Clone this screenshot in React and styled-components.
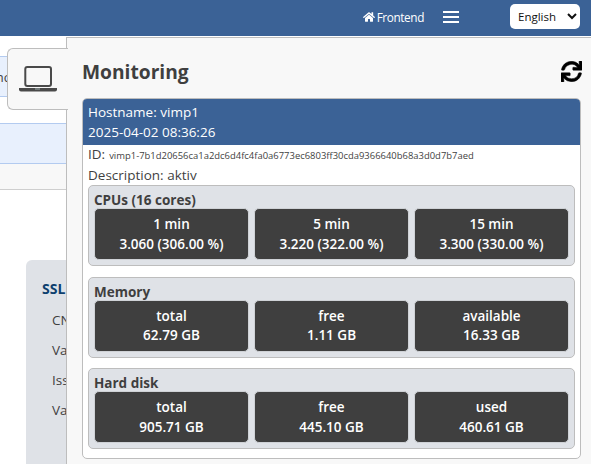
import React from "react";
import styled, { createGlobalStyle } from "styled-components";
import { FaHome, FaSync } from "react-icons/fa";

const Global = createGlobalStyle`
  html, body { margin: 0; height: 100%; overflow: hidden; background: #fff; }
  body { font-family: "Open Sans", "Noto Sans", sans-serif; font-size: 13.5px; color: #3f3f3f; }
  #root { height: 100%; }
  * { box-sizing: border-box; }
`;

const Page = styled.div`
  position: relative;
  width: 591px;
  height: 464px;
  overflow: hidden;
`;
const TopBar = styled.header`
  height: 36px;
  background: #3b6296;
  display: flex;
  align-items: center;
  justify-content: flex-end;
  padding: 0 11px 3px 0;
  color: #fff;
`;
const FrontLink = styled.a`
  display: flex;
  align-items: center;
  gap: 2px;
  font-size: 11.8px;
  font-weight: 500;
  color: #fff;
  margin-right: 19px;
  letter-spacing: -0.4px;
`;
const Burger = styled.div`
  width: 16px;
  height: 12px;
  margin-right: 51px;
  border-top: 2px solid #fff;
  border-bottom: 2px solid #fff;
  position: relative;
  &::after {
    content: "";
    position: absolute;
    left: 0;
    right: 0;
    top: 3px;
    height: 2px;
    background: #fff;
  }
`;
const LangWrap = styled.div`
  position: relative;
  width: 70px;
  height: 25px;
`;
const Lang = styled.select`
  appearance: none;
  width: 100%;
  height: 100%;
  border: 0;
  border-radius: 5px;
  background: #fff;
  color: #111;
  font: 11.5px "Open Sans", sans-serif;
  padding: 0 0 0 8px;
`;
const Chevron = styled.svg`
  position: absolute;
  right: 3px;
  top: 9px;
  width: 10px;
  height: 7px;
  pointer-events: none;
`;

const Backdrop = styled.div`
  display: flex;
  flex-direction: column;
`;
const Row = styled.div`
  height: ${(p) => p.$h}px;
  margin-top: ${(p) => p.$mt}px;
  background: ${(p) => p.$bg};
  border-style: solid;
  border-color: ${(p) => p.$line};
  border-width: ${(p) => p.$lineWidth};
  display: flex;
  align-items: center;
`;
const ClippedLabel = styled.div`
  width: 7px;
  overflow: hidden;
  display: flex;
  justify-content: flex-end;
  flex-shrink: 0;
  font-size: 13px;
  span { flex-shrink: 0; margin-right: -3px; }
`;
const SslCard = styled.section`
  margin: 70px 0 0 26px;
  height: 220px;
  background: #dfe2e7;
  border-radius: 6px 0 0 0;
  padding: 19px 0 0 16px;
`;
const SslTitle = styled.div`
  font-size: 14px;
  font-weight: 700;
  color: #0d3f6e;
  line-height: 20px;
  margin-bottom: 11px;
`;
const SslLine = styled.div`
  font-size: 13.5px;
  line-height: 20px;
  margin: 0 0 10px 10px;
  white-space: nowrap;
`;

const Panel = styled.aside`
  position: absolute;
  top: 37px;
  left: 66px;
  right: 0;
  bottom: 0;
  background: #f8f8f8;
  border-left: 1px solid #bdbdbd;
  border-top: 1px solid #bdbdbd;
  padding: 0 10px 0 15px;
`;
const Tab = styled.div`
  position: absolute;
  top: 10px;
  left: -60px;
  width: 61px;
  height: 62px;
  background: #f8f8f8;
  border: 1px solid #bdbdbd;
  border-right: 0;
  border-radius: 6px 0 0 6px;
  display: flex;
  align-items: center;
  justify-content: center;
`;
const PanelHead = styled.div`
  height: 60px;
  display: flex;
  align-items: center;
  justify-content: space-between;
  padding-top: 6px;
`;
const Title = styled.h2`
  margin: 0;
  font-size: 19.2px;
  font-weight: 700;
  color: #3f3f3f;
`;
const Refresh = styled(FaSync)`
  width: 21px;
  height: 21px;
  color: #000;
  margin-right: -1px;
  stroke: #000;
  stroke-width: 12px;
`;
const HostCard = styled.div`
  background: #fff;
  border: 1px solid #bdbdbd;
  border-radius: 5px;
  height: 361px;
  overflow: hidden;
`;
const HostHead = styled.div`
  height: 46px;
  background: #3b6296;
  color: #fff;
  padding: 4px 5px 0;
  line-height: 19.5px;
`;
const HostBody = styled.div`
  padding: 0 5px;
`;
const InfoLine = styled.div`
  line-height: 19.5px;
  white-space: nowrap;
`;
const HostId = styled.span`
  font-size: 9.45px;
  margin-left: 4px;
`;
const Group = styled.section`
  background: #dfe2e7;
  border: 1px solid #bdbdbd;
  border-radius: 5px;
  height: 81px;
  padding: 6px 5px 0;
  margin-bottom: 10.6px;
`;
const GroupTitle = styled.div`
  font-weight: 700;
  font-size: 13.5px;
  line-height: 16px;
  white-space: nowrap;
`;
const Cells = styled.div`
  display: grid;
  grid-template-columns: repeat(3, 1fr);
  gap: 5px;
`;
const Cell = styled.div`
  height: 52px;
  background: #3f3f3f;
  border: 1px solid #cfd2d6;
  border-radius: 5px;
  color: #fff;
  font-weight: 600;
  text-align: center;
  line-height: 19.5px;
  padding-top: 6px;
`;

const groups = [
  { title: "CPUs (16 cores)", cells: [["1 min", "3.060 (306.00 %)"], ["5 min", "3.220 (322.00 %)"], ["15 min", "3.300 (330.00 %)"]] },
  { title: "Memory", cells: [["total", "62.79 GB"], ["free", "1.11 GB"], ["available", "16.33 GB"]] },
  { title: "Hard disk", cells: [["total", "905.71 GB"], ["free", "445.10 GB"], ["used", "460.61 GB"]] },
];

export default function App() {
  return (
    <Page>
      <Global />
      <TopBar>
        <FrontLink><FaHome size={12} />Frontend</FrontLink>
        <Burger />
        <LangWrap>
          <Lang defaultValue="en"><option value="en">English</option></Lang>
          <Chevron viewBox="0 0 10 7"><path d="M1 1l4 4 4-4" fill="none" stroke="#111" strokeWidth="2" /></Chevron>
        </LangWrap>
      </TopBar>
      <Backdrop>
        <Row $mt={20} $h={41} $bg="#e8f0fd" $line="#b3cbf0" $lineWidth="1px 0"><ClippedLabel><span>Sync</span></ClippedLabel></Row>
        <Row $mt={26} $h={41} $bg="#e8f0fd" $line="#b3cbf0" $lineWidth="1px 0" />
        <Row $mt={0} $h={26} $bg="#f8f8f8" $line="#cfcfcf" $lineWidth="0 0 1px" />
        <SslCard>
          <SslTitle>SSL Certificate</SslTitle>
          <SslLine>CN: vimp1</SslLine>
          <SslLine>Valid from</SslLine>
          <SslLine>Issuer</SslLine>
          <SslLine>Valid to</SslLine>
        </SslCard>
      </Backdrop>
      <Panel>
        <Tab>
          <svg width="38" height="26" viewBox="0 0 38 26">
            <rect x="6.3" y="1" width="25.7" height="19" rx="2" fill="none" stroke="#4a4a4a" strokeWidth="2" />
            <path d="M0 22h38v1.6a2 2 0 0 1-2 2H2a2 2 0 0 1-2-2z" fill="#4a4a4a" />
            <rect x="16" y="22.5" width="5" height="1" fill="#9aa" />
          </svg>
        </Tab>
        <PanelHead>
          <Title>Monitoring</Title>
          <Refresh />
        </PanelHead>
        <HostCard>
          <HostHead>
            <div>Hostname: vimp1</div>
            <div>2025-04-02 08:36:26</div>
          </HostHead>
          <HostBody>
            <InfoLine>ID:<HostId>vimp1-7b1d20656ca1a2dc6d4fc4fa0a6773ec6803ff30cda9366640b68a3d0d7b7aed</HostId></InfoLine>
            <InfoLine>Description: aktiv</InfoLine>
            {groups.map((g) => (
              <Group key={g.title}>
                <GroupTitle>{g.title}</GroupTitle>
                <Cells>
                  {g.cells.map(([a, b]) => (
                    <Cell key={a}><div>{a}</div><div>{b}</div></Cell>
                  ))}
                </Cells>
              </Group>
            ))}
          </HostBody>
        </HostCard>
      </Panel>
    </Page>
  );
}
